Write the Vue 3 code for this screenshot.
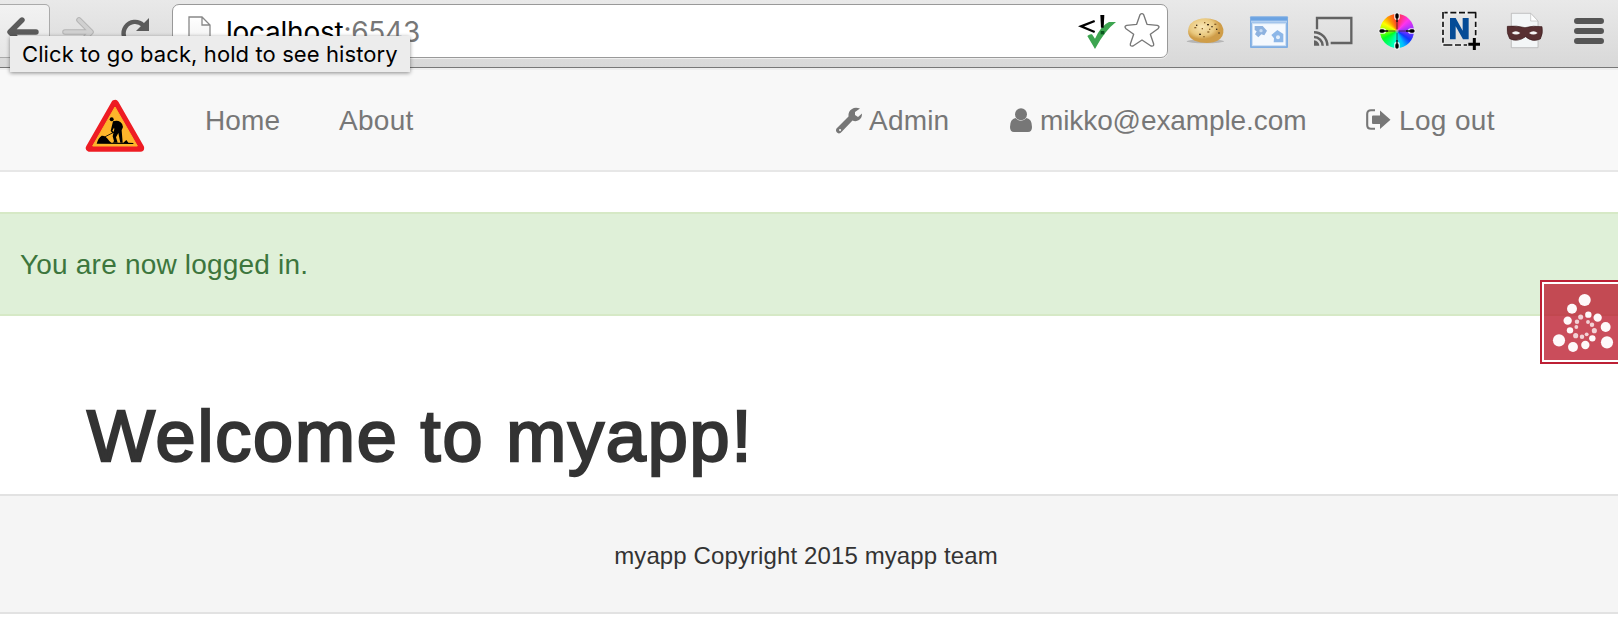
<script setup>
const dots = [
  [200, 90, 19], [162, 116, 15.5], [149, 152, 13], [156, 181, 10], [173, 197, 8], [192, 200, 7],
  [206, 193, 6], [123, 211, 19], [165, 231, 15.5], [202, 225, 13], [223, 205, 10], [229, 182, 8],
  [222, 164, 7], [210, 156, 6], [267, 217, 19], [263, 171, 15.5], [239, 143, 13], [211, 134, 10],
  [188, 141, 8], [177, 155, 7], [175, 171, 6],
]
const crumbs = [[403, 81], [408, 74], [432, 66], [441, 72], [447, 86], [454, 78], [463, 71], [468, 86], [425, 84], [417, 101], [430, 108], [475, 97], [442, 94]]
</script>

<template>
  <div class="page">
    <header class="chrome">
      <div class="back">
        <svg width="32" height="32" viewBox="0 0 32 32"><path d="M15 4 L3 16 L15 28 M4 16 H29" fill="none" stroke="#5b5b5b" stroke-width="5.4" stroke-linecap="round" stroke-linejoin="round" /></svg>
      </div>
      <svg class="fwd" width="32" height="32" viewBox="0 0 32 32"><path d="M17 4 L29 16 L17 28 M28 16 H3" fill="none" stroke="#b4b4b4" stroke-width="5.6" stroke-linecap="round" stroke-linejoin="round" /><path d="M17 4 L29 16 L17 28 M28 16 H3" fill="none" stroke="#d0d0d0" stroke-width="3.6" stroke-linecap="round" stroke-linejoin="round" /></svg>
      <svg class="reload" width="32" height="32" viewBox="0 0 32 32"><path d="M23 8 A11.5 11.5 0 1 0 26 20" fill="none" stroke="#5b5b5b" stroke-width="4.4" /><path d="M29 1 V14 H16 Z" fill="#5b5b5b" /></svg>
      <div class="omnibox">
        <svg class="doc" width="24" height="32" viewBox="0 0 24 32"><defs><linearGradient id="paper" x2="0" y2="1"><stop offset="0" stop-color="#fff" /><stop offset="1" stop-color="#eee" /></linearGradient></defs><path d="M1 1 H14 L22 9 V31 H1 Z M14 1 V9 H22" fill="url(#paper)" stroke="#888" stroke-width="1.3" /></svg>
        <span class="url">localhost<span class="port">:6543</span></span>
        <svg class="valid" width="40" height="40" viewBox="52 33 120 120"><path d="M102 63 L61 79 L102 96" fill="none" stroke="#000" stroke-width="7" /><path d="M80 108 Q87 101 94 103 L103 116 Q122 76 145 66 L166 66 Q132 92 103 147 Z" fill="#3da550" /><path d="M119 45 h12 l-2 38 h-8 z" fill="#000" /><path d="M120 93 h11 v10 h-11 z" fill="#0b5a20" /></svg>
        <svg class="star" width="40" height="40" viewBox="185 33 120 120"><path d="M239 44 Q245 38 250 44 L260 73 L291 76 Q300 79 293 86 L270 103 L280 132 Q281 140 272 138 L245 120 L218 138 Q209 140 210 132 L220 103 L197 86 Q190 79 199 76 L229 73 Z" fill="#fff" stroke="#777" stroke-width="4" stroke-linejoin="round" /></svg>
      </div>
      <div class="extensions">
        <svg width="40" height="40" viewBox="375 33 120 120">
          <defs><radialGradient id="cookie" cx=".4" cy=".35"><stop offset="0" stop-color="#f9e6b4" /><stop offset=".7" stop-color="#e9c87e" /><stop offset="1" stop-color="#cf9d48" /></radialGradient></defs>
          <ellipse cx="436" cy="124" rx="56" ry="6" fill="#999" opacity=".6" />
          <path d="M384 94 Q385 66 415 58 Q440 51 468 61 Q493 73 490 98 Q487 119 460 127 Q430 132 404 122 Q384 113 384 94Z" fill="url(#cookie)" />
          <rect v-for="([x, y], i) in crumbs" :key="i" :x="x" :y="y" :width="i % 3 ? 4 : 6" height="4" :fill="i % 2 ? '#3b2a18' : '#8a6028'" />
        </svg>
        <svg width="40" height="40" viewBox="567 33 120 120">
          <rect x="570" y="49" width="114" height="95" rx="3" fill="#80aee3" /><rect x="573" y="52" width="108" height="10" fill="#6ba3e2" /><rect x="573" y="62" width="108" height="6" fill="#b3d0f1" />
          <rect x="577" y="71" width="100" height="66" fill="#f5f9fe" stroke="#cfe0f4" stroke-width="3" />
          <path d="M584 78 L608 78 L621 92 L613 106 L604 103 L595 112 L585 103 L590 94 L584 90Z" fill="#8eb2df" /><path d="M634 105 L652 90 L670 102 L670 127 L641 127 L642 115Z" fill="#8db7e8" /><circle cx="603" cy="92" r="5" fill="#c6dbf3" /><circle cx="654" cy="112" r="6" fill="#e4effb" />
        </svg>
        <svg width="40" height="40" viewBox="759 33 120 120">
          <path d="M771 88 V54 H874 V129 H812" fill="none" stroke="#626262" stroke-width="7" />
          <path d="M762 97 A40 40 0 0 1 802 137 M762 111 A26 26 0 0 1 788 137" fill="none" stroke="#626262" stroke-width="7.5" /><path d="M762 121 A16 16 0 0 1 778 137 H762Z" fill="#626262" />
        </svg>
        <div class="wheel">
          <div class="hues"></div>
          <svg width="40" height="40" viewBox="141 33 120 120"><path d="M201 55 V130 M160 93 H242" stroke="#222" stroke-width="3" opacity=".7" /><circle cx="201" cy="93" r="5" fill="#fff" opacity=".45" /><path d="M201 46 V52 M201 134 V140 M154 93 H160 M242 93 H248" stroke="#fff" stroke-width="17" stroke-linecap="round" opacity=".85" /><path d="M201 45 V51 M201 135 V141 M153 93 H159 M243 93 H249" stroke="#000" stroke-width="10" stroke-linecap="round" /><path d="M201 54 V66 M201 120 V134 M162 93 H174 M228 93 H242" stroke="#111" stroke-width="4" /></svg>
        </div>
        <div class="clip">
          <svg width="40" height="40" viewBox="333 33 120 120"><path d="M341 39 H438 V111 M339 36 V135 H411" fill="none" stroke="#fff" stroke-width="9" opacity=".4" /><path d="M343 38 H353 M361 38 H379 M387 38 H405 M413 38 H439 M339 36 V56 M339 65 V81 M339 89 V105 M339 113 V128 M437 38 V55 M437 65 V81 M437 90 V106 M340 135 H367 M375 135 H393 M401 135 H411" stroke="#111" stroke-width="5" /><path d="M433 114 V150 M415 133 H450" stroke="#000" stroke-width="9" /><path d="M360 54 H377 L398 92 V54 H416 V118 H399 L377 79 V118 H360Z" fill="#054b96" /></svg>
        </div>
        <svg width="40" height="40" viewBox="525 33 120 120">
          <path d="M544 40 H602 L624 63 V143 H544Z" fill="#f3f6f7" stroke="#aaa" stroke-width="2" /><path d="M602 40 V63 H624Z" fill="#fff" stroke="#bbb" stroke-width="2" />
          <path d="M532 79 Q560 76 585 83 Q610 76 636 80 Q640 100 631 117 Q607 128 587 110 Q562 128 539 116 Q529 100 532 79Z" fill="#583032" stroke="#38191b" stroke-width="2" /><path d="M545 99 Q557 89 571 99 Q559 108 545 99Z M597 99 Q611 89 623 99 Q610 108 597 99Z" fill="#f5f5f5" />
        </svg>
        <svg width="40" height="40" viewBox="717 33 120 120"><path d="M741 63 H813 M741 93 H813 M741 123 H813" stroke="#555" stroke-width="18" stroke-linecap="round" /></svg>
      </div>
      <div class="tip"><span>Click to go back, hold to see history</span></div>
    </header>

    <nav class="navbar">
      <svg class="logo" width="60" height="54" viewBox="45 117 180 162">
        <path d="M135 131 L59 264 H211Z" fill="#ee1c23" stroke="#ee1c23" stroke-width="23" stroke-linejoin="round" /><path d="M135 141 L68 258 H202Z" fill="#fdb52b" stroke="#fdb52b" stroke-width="3" stroke-linejoin="round" />
        <circle cx="125" cy="178" r="6" /><path d="M129 184 Q142 179 151 186 Q160 193 159 201 L155 211 L158 248 H151 L145 219 L138 232 L143 248 H129 L132 243 L128 229 L133 207 L132 203 L127 212 L132 217 L128 220 L122 213 Z" /><path d="M102 232 L150 207" stroke="#000" stroke-width="2.5" /><path d="M80 251 Q84 235 95 227 Q107 226 118 243 L124 248 H160 L169 240 L175 248 L190 249 V252Z" />
      </svg>
      <a class="home">Home</a>
      <a class="about">About</a>
      <div class="right">
        <a class="admin"><svg width="28" height="28" viewBox="0 0 28 28"><path fill-rule="evenodd" d="M13.5 9.5 Q13 4 17 2 Q20 0 25 1.5 L20 5 V8 L23 10 L27 6.5 Q27 11 24 13 Q21 15 17.5 13.5 L7 24.5 Q4 28 1.5 25 Q0 22.5 2.5 20.5Z M5 22 a1 1 0 1 0 .1 0Z" fill="#777" /></svg>Admin</a>
        <a class="mail"><svg width="28" height="28" viewBox="0 0 28 28"><circle cx="14" cy="7.2" r="6" fill="#777" /><path d="M8.5 11 Q14 16.5 19.5 11 Q25 12 25 20 Q25 25 21 25 H7 Q3 25 3 20 Q3 12 8.5 11Z" fill="#777" /></svg><span>mikko@example.com</span></a>
        <a class="logout"><svg width="28" height="28" viewBox="0 0 28 28"><path d="M10 3.2 H6 Q2.2 3.2 2.2 7 V18 Q2.2 21.8 6 21.8 H10" fill="none" stroke="#777" stroke-width="2.1" /><path d="M8 8.5 H15 V3.5 L25.5 12.8 L15 22 V17 H8 Q7 17 7 16 V9.5 Q7 8.5 8 8.5Z" fill="#777" /></svg>Log out</a>
      </div>
    </nav>

    <div class="alert">You are now logged in.</div>
    <main><h1>Welcome to myapp!</h1></main>
    <footer>myapp Copyright 2015 myapp team</footer>

    <aside class="debug">
      <svg width="74" height="76" viewBox="78 42 222 228"><circle v-for="([x, y, r], i) in dots" :key="i" :cx="x" :cy="y" :r="r * 0.96" fill="#fff" :opacity="r < 9 ? 0.75 : 0.97" /></svg>
    </aside>
  </div>
</template>

<style>
body { background: #fff; }
</style>

<style scoped>
* { box-sizing: border-box; }
.page { position: relative; height: 624px; overflow: hidden; font-family: "Liberation Sans", Arial, sans-serif; background: #fff; }
svg { display: block; flex: none; }
.chrome { position: relative; display: flex; align-items: flex-start; height: 68px; background: linear-gradient(#e9e9e9, #d8d8d8); border-bottom: 1px solid #777; }
.back { width: 50px; height: 54px; margin-top: 4px; padding: 11px 0 0 7px; border: 1px solid #aaa; border-left: 0; border-radius: 0 5px 5px 0; background: linear-gradient(#f2f2f2, #e6e6e6); }
.fwd { margin: 16px 0 0 12px; }
.reload { margin: 17px 0 0 26px; }
.omnibox { display: flex; width: 996px; height: 54px; margin: 4px 0 0 20px; border: 1px solid #999; border-radius: 7px; background: #fff; box-shadow: 0 1px 0 #eee; }
.doc { margin: 11px 0 0 15px; }
.url { flex: 1; margin-left: 14px; font: 28px/54px Inter, sans-serif; color: #000; letter-spacing: -.25px; }
.port { color: #777; }
.valid { margin: 6px 4px 0 0; }
.star { margin: 6px 5px 0 0; }
.extensions { display: flex; gap: 24px; margin: 11px 0 0 17px; }
.wheel { position: relative; width: 40px; height: 40px; }
.wheel svg { position: relative; }
.hues { position: absolute; left: 3px; top: 3px; width: 34px; height: 34px; border-radius: 50%; background: conic-gradient(#f33, #f3e 45deg, #83f 90deg, #13f 125deg, #0bf 155deg, #0fc 190deg, #0f2 240deg, #9f0 270deg, #ff0 300deg, #f90 325deg, #f33); }
.tip { position: absolute; left: 10px; top: 36px; width: 400px; height: 36px; background: #ececec; box-shadow: 0 1px 4px rgba(0,0,0,.45); padding-left: 12px; font: 22px/37px Inter, sans-serif; color: #000; white-space: nowrap; z-index: 2; }
.tip span { letter-spacing: .1px; }
.navbar { display: flex; align-items: flex-start; height: 104px; background: #f8f8f8; border-bottom: 2px solid #e7e7e7; border-top: 2px solid #eee; padding-left: 85px; color: #777; font-size: 28px; line-height: 40px; }
.logo { margin-top: 29px; }
.navbar a { display: flex; white-space: nowrap; margin-top: 31px; }
.home { margin-left: 60px; width: 134px; letter-spacing: .1px; }
.about { width: 496px; letter-spacing: .3px; }
.right { display: flex; }
.right svg { margin-top: 6px; margin-right: 6px; }
.admin { width: 172px; letter-spacing: .2px; }
.mail { width: 358px; }
.mail span { margin-left: -1px; letter-spacing: -.1px; }
.logout { letter-spacing: .35px; }
.alert { margin-top: 40px; height: 104px; padding: 31px 20px; border: solid #d6e9c6; border-width: 2px 0; background: #dff0d8; color: #3c763d; font-size: 28px; line-height: 40px; letter-spacing: .2px; }
main { height: 178px; padding: 80px 87px 0; }
h1 { margin: 0; font-size: 72px; font-weight: 400; line-height: 80px; letter-spacing: 1.85px; color: #333; -webkit-text-stroke: 2.4px #333; white-space: nowrap; }
footer { height: 120px; padding-top: 40px; padding-right: 6px; text-align: center; border: solid #e2e2e2; border-width: 2px 0; background: #f5f5f5; color: #333; font-size: 24px; line-height: 40px; letter-spacing: .11px; }
.debug { position: absolute; top: 280px; right: 0; width: 78px; height: 84px; border: 2px solid #bd2035; border-right: 0; background: rgba(187,27,45,.78); }
.debug svg { box-sizing: content-box; border: solid #fff; border-width: 2px 0 2px 2px; }
</style>
